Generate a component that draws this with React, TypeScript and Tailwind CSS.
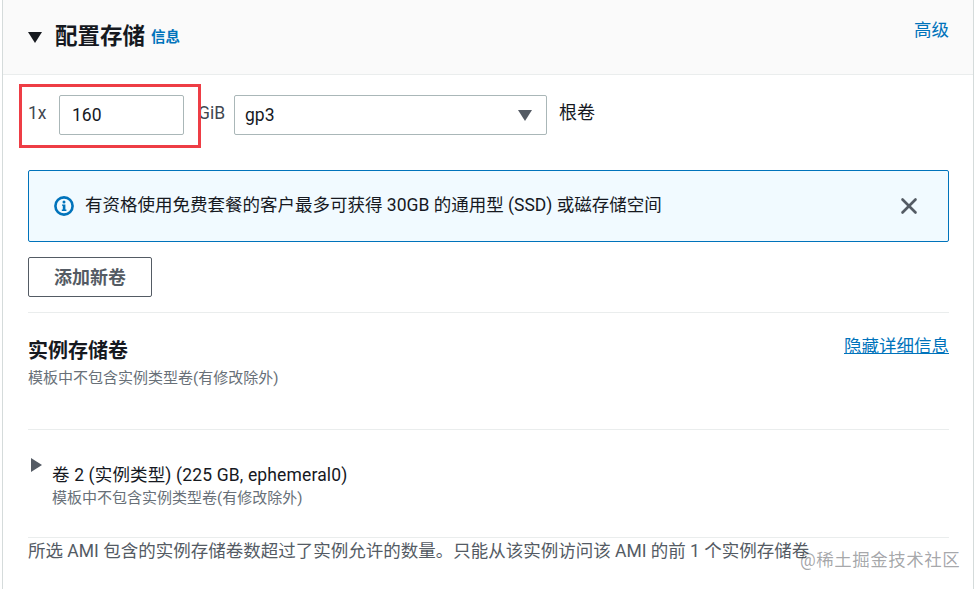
import { X } from "lucide-react";

const font = "font-['Roboto','Noto_Sans_CJK_SC',sans-serif]";

export default function App() {
  return (
    <div className={`relative h-[589px] w-[979px] overflow-hidden bg-white text-[#16191f] ${font}`}>
      <div className="ml-[2px] h-full w-[972px] border-x border-[#d5dbdb]">
        {/* header */}
        <div className="flex h-[75px] items-start justify-between border-b border-[#eaeded] bg-[#fafafa] pl-[25px] pr-[24px]">
          <div className="flex items-center pt-[21px]">
            <svg width="14" height="11" viewBox="0 0 14 11" className="mt-[2px]">
              <path d="M0 0h14L7 11z" fill="#16191f" />
            </svg>
            <span className="ml-[13px] text-[22.5px] leading-[30px] font-bold">配置存储</span>
            <span className="ml-[6px] mt-[4px] text-[14.5px] leading-[20px] font-bold text-[#0073bb]">信息</span>
          </div>
          <a className="pt-[18px] text-[17.5px] leading-[24px] text-[#0073bb]">高级</a>
        </div>

        <div className="pl-[25px] pr-[24px]">
          {/* volume row */}
          <div className="mt-[20px] flex h-[40px] items-center text-[17.5px]">
            <span className="w-[31px] -translate-y-[2px] leading-[24px] text-[#414750]">1x</span>
            <div className="flex h-[40px] w-[125px] items-center rounded-[2px] border border-[#aab7b8] pl-[12px]">160</div>
            <span className="ml-[14px] w-[36px] -translate-y-[2px] leading-[24px] text-[#414750]">GiB</span>
            <div className="flex h-[40px] w-[313px] items-center justify-between rounded-[2px] border border-[#aab7b8] pl-[10px] pr-[14px]">
              <span>gp3</span>
              <svg width="14" height="11" viewBox="0 0 14 11">
                <path d="M0 0h14L7 11z" fill="#545b64" />
              </svg>
            </div>
            <span className="ml-[12px] -translate-y-[2px] text-[18px] leading-[24px]">根卷</span>
          </div>

          {/* free tier notice */}
          <div className="mt-[35px] flex h-[72px] items-center justify-between rounded-[2px] border border-[#0073bb] bg-[#f1faff] pl-[25px] pr-[26px]">
            <div className="flex items-center gap-[11px]">
              <svg width="20" height="20" viewBox="0 0 20 20">
                <circle cx="10" cy="10" r="8.6" fill="none" stroke="#0073bb" strokeWidth="2.6" />
                <circle cx="10" cy="6" r="1.5" fill="#0073bb" />
                <path d="M8 8.4h3.4v5.2h1V15H7.8v-1.4h1v-3.8H8z" fill="#0073bb" />
              </svg>
              <span className="-mt-[2px] text-[17.5px] leading-[24px] text-[#16191f]">有资格使用免费套餐的客户最多可获得 30GB 的通用型 (SSD) 或磁存储空间</span>
            </div>
            <X size={26} strokeWidth={2.4} className="text-[#545b64]" />
          </div>

          <button className="mt-[15px] flex h-[40px] w-[124px] items-center justify-center rounded-[2px] border border-[#545b64] text-[18px] font-bold text-[#545b64]">
            添加新卷
          </button>

          <div className="mt-[15px] border-t border-[#eaeded]" />

          {/* instance store */}
          <div className="flex items-start justify-between pt-[25px]">
            <div>
              <div className="text-[20px] leading-[26px] font-bold">实例存储卷</div>
              <div className="mt-[5px] text-[15px] leading-[18px] text-[#687078]">模板中不包含实例类型卷(有修改除外)</div>
            </div>
            <a className="-mt-[3px] text-[17.5px] leading-[22px] text-[#0073bb] underline">隐藏详细信息</a>
          </div>

          <div className="mt-[42px] border-t border-[#eaeded]" />

          <div className="flex items-start pt-[28px]">
            <svg width="11" height="14" viewBox="0 0 11 14" className="ml-[3px] shrink-0">
              <path d="M0 0l11 7-11 7z" fill="#545b64" />
            </svg>
            <div className="ml-[10px] mt-[5px]">
              <div className="text-[17.5px] leading-[24px] tracking-[0.15px]">卷 2 (实例类型) (225 GB, ephemeral0)</div>
              <div className="text-[15px] leading-[22px] text-[#687078]">模板中不包含实例类型卷(有修改除外)</div>
            </div>
          </div>

          <div className="mt-[28px] border-t border-[#eaeded]" />
          <p className="whitespace-nowrap text-[17.5px] leading-[26px] text-[#545b64]">所选 AMI 包含的实例存储卷数超过了实例允许的数量。只能从该实例访问该 AMI 的前 1 个实例存储卷</p>
        </div>
      </div>

      {/* annotation drawn over the screenshot */}
      <div className="absolute left-[19px] top-[84px] h-[64px] w-[182px] border-[3px] border-[#ee3d45]" />
      {/* watermark */}
      <div className="absolute left-[800px] top-[548px] text-[17.5px] leading-[24px] tracking-[0.5px] text-[#16191f]/40">@稀土掘金技术社区</div>
    </div>
  );
}
